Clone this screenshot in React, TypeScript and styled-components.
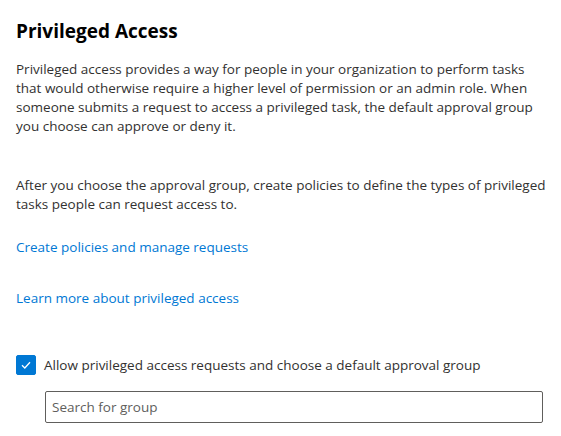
import React, { useState } from 'react';
import styled, { createGlobalStyle } from 'styled-components';

const GlobalStyle = createGlobalStyle`
    body {
        margin: 0;
        background: #ffffff;
        font-family: "Open Sans", "Noto Sans", sans-serif;
        color: #323130;
    }
`;

const Panel = styled.div`
    display: flex;
    flex-direction: column;
    padding: 18px 16px 0 16px;
    width: 561px;
    box-sizing: border-box;
`;

const Title = styled.h2`
    margin: 0 0 16px 0;
    font-size: 19px;
    font-weight: 700;
    line-height: 26px;
    color: #000000;
`;

const Paragraph = styled.p<{ gap: number }>`
    margin: 0 0 ${(p) => p.gap}px 0;
    font-size: 13.5px;
    line-height: 19px;
    white-space: nowrap;
`;

const LinkText = styled.a<{ gap: number }>`
    display: block;
    margin: 0 0 ${(p) => p.gap}px 0;
    font-size: 13.5px;
    line-height: 19px;
    color: #0078d4;
    text-decoration: none;
    cursor: pointer;
`;

const CheckRow = styled.label`
    display: flex;
    align-items: center;
    gap: 8px;
    font-size: 13.5px;
    line-height: 20px;
    cursor: pointer;
`;

const Box = styled.span<{ checked: boolean }>`
    display: flex;
    align-items: center;
    justify-content: center;
    width: 20px;
    height: 20px;
    box-sizing: border-box;
    border-radius: 2px;
    background: ${(p) => (p.checked ? '#0078d4' : '#ffffff')};
    border: 1px solid ${(p) => (p.checked ? '#0078d4' : '#323130')};
`;

const SearchBox = styled.input`
    margin: 16px 0 0 29px;
    width: 498px;
    height: 32px;
    box-sizing: border-box;
    border: 1px solid #605e5c;
    border-radius: 2px;
    padding: 0 6px;
    font-family: "Open Sans", "Noto Sans", sans-serif;
    font-size: 13.5px;
    color: #323130;
    outline: none;
    &::placeholder {
        color: #605e5c;
    }
`;

function App() {
    const [allow, setAllow] = useState(true);
    return (
        <>
            <GlobalStyle />
            <Panel>
                <Title>Privileged Access</Title>
                <Paragraph gap={40}>
                    Privileged access provides a way for people in your organization to perform tasks<br />
                    that would otherwise require a higher level of permission or an admin role. When<br />
                    someone submits a request to access a privileged task, the default approval group<br />
                    you choose can approve or deny it.
                </Paragraph>
                <Paragraph gap={24}>
                    After you choose the approval group, create policies to define the types of privileged<br />
                    tasks people can request access to.
                </Paragraph>
                <LinkText gap={32}>Create policies and manage requests</LinkText>
                <LinkText gap={47}>Learn more about privileged access</LinkText>
                <CheckRow onClick={() => setAllow(!allow)}>
                    <Box checked={allow}>
                        {allow && (
                            <svg width="12" height="12" viewBox="0 0 12 12">
                                <path d="M2 6.3 L4.8 9 L10 3.2" fill="none" stroke="#ffffff" strokeWidth="1.3" />
                            </svg>
                        )}
                    </Box>
                    Allow privileged access requests and choose a default approval group
                </CheckRow>
                <SearchBox placeholder="Search for group" />
            </Panel>
        </>
    );
}

export default App;
